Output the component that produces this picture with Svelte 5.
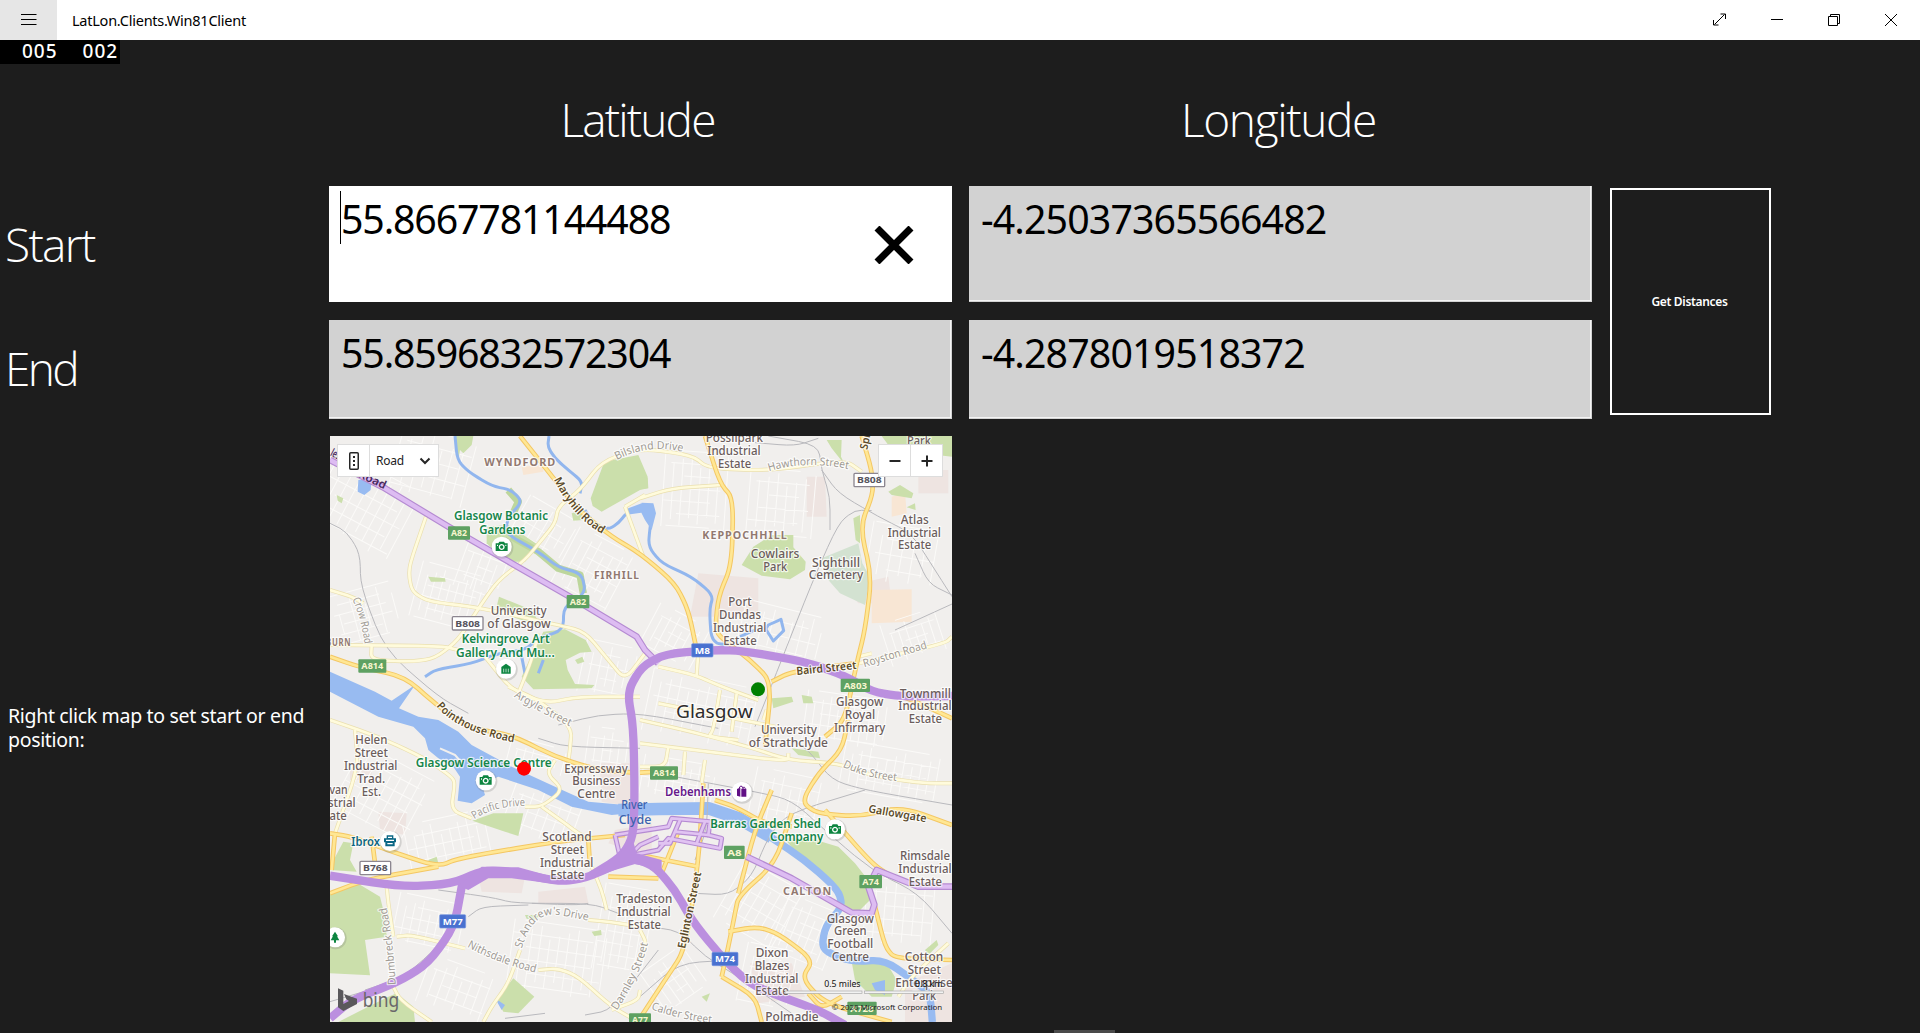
<script>
  // Map artwork uses a fine grid of three units per screen pixel.
  const parks = [
    'M797,205 L838,95 L940,75 L968,140 L968,175 L945,180 L830,245 L803,228Z',
    'M390,18 L445,18 L440,45 L415,70 L405,60 L400,90Z',
    'M485,290 L550,285 L640,345 L600,395 L540,395 L485,340Z',
    'M522,500 L620,540 L650,590 L560,560 L515,530Z',
    'M655,605 L720,598 L782,630 L800,665 L765,668 L722,690 L728,720 L750,762 L808,765 L800,775 L625,778 L590,740 L625,665Z',
    'M750,690 L772,680 L778,695 L758,702Z',
    'M310,440 L360,445 L362,455 L318,455Z',
    'M1250,405 L1285,350 L1340,315 L1405,315 L1405,352 L1442,395 L1440,420 L1395,448 L1310,437Z',
    'M1670,18 L1881,18 L1881,80 L1790,70 L1690,45Z',
    'M1505,30 L1550,30 L1548,80 L1560,105 L1520,55Z',
    'M1690,185 L1725,165 L1765,190 L1760,205 L1700,195Z',
    'M1745,232 L1770,220 L1772,240Z',
    'M15,1390 L95,1358 L165,1400 L180,1460 L185,1520 L120,1530 L135,1636 L15,1630Z',
    'M15,1310 L55,1235 L85,1240 L75,1290 L95,1325 L15,1320Z',
    'M442,1172 L505,1150 L595,1150 L580,1218 L540,1205Z',
    'M40,1776 L100,1745 L190,1700 L215,1690 L265,1730 L270,1776Z',
    'M565,1645 L628,1700 L580,1750 L535,1745 L515,1708Z',
    'M1378,1225 L1455,1225 L1540,1250 L1590,1300 L1625,1345 L1635,1410 L1600,1445 L1560,1430 L1545,1390 L1440,1300Z',
    'M1580,1595 L1680,1590 L1715,1650 L1700,1700 L1640,1700 L1590,1650Z',
    'M1800,1560 L1835,1530 L1840,1545 L1810,1575Z',
    'M1340,805 L1400,800 L1405,815 L1345,835Z',
    'M1430,795 L1460,800 L1465,820 L1435,820Z',
    'M1400,955 L1480,965 L1485,985 L1420,975Z',
    'M945,140 L968,145 L970,175 L945,178Z',
    'M1585,265 L1605,255 L1605,340 L1592,330Z',
    'M740,250 L770,240 L775,270 L745,272Z',
    'M35,195 L55,205 L50,220 L38,212Z',
    'M310,1290 L335,1280 L340,1300 L315,1312Z',
    'M600,1455 L645,1455 L630,1470 L605,1466Z',
    'M800,1505 L828,1500 L830,1515 L808,1518Z',
    'M1130,1700 L1155,1690 L1145,1715Z'
  ];
  const industrial = [
    'M1445,140 L1500,140 L1505,260 L1445,260Z',
    'M1120,430 L1300,445 L1300,560 L1095,560Z',
    'M1560,470 L1690,440 L1700,520 L1600,520Z',
    'M640,1385 L780,1370 L790,1420 L640,1420Z',
    'M825,1000 L930,1000 L930,1130 L830,1115Z',
    'M160,1145 L245,1150 L240,1215 L165,1200Z',
    'M75,1010 L140,1010 L140,1050 L75,1050Z',
    'M460,1340 L600,1340 L590,1390 L470,1385Z',
    'M1275,1600 L1400,1600 L1440,1700 L1300,1720Z',
    'M1740,1660 L1881,1600 L1881,1776 L1740,1776Z',
    'M870,1200 L980,1180 L980,1280 L850,1240Z',
    'M1780,120 L1870,120 L1870,190 L1780,190Z'
  ];
  const sands = [
    'M1640,480 L1760,478 L1760,575 L1640,580Z',
    'M1700,200 L1740,185 L1745,250 L1700,260Z',
    'M590,110 L655,105 L655,125 L595,135Z'
  ];

  // Small white side streets, laid out as rotated blocks.
  const blocks = [
    [120, 230, 280, 230, 28, 30], [330, 110, 240, 200, 15, 32], [370, 500, 200, 170, 15, 24],
    [120, 560, 170, 190, 75, 30], [660, 300, 180, 140, 30, 28], [810, 420, 200, 190, 28, 26],
    [1110, 180, 190, 230, 4, 27], [1370, 220, 200, 200, 5, 28], [1050, 620, 170, 140, 28, 24],
    [850, 720, 160, 160, 12, 26], [1130, 840, 330, 190, 12, 29], [1370, 610, 250, 150, 14, 30],
    [1740, 380, 220, 180, 10, 33], [1770, 620, 180, 130, -18, 24], [1560, 870, 240, 150, 8, 24],
    [1700, 1030, 300, 150, 10, 26], [180, 1100, 260, 220, 28, 29], [370, 1230, 250, 140, -12, 27],
    [660, 1160, 230, 160, 20, 30], [310, 1480, 200, 150, 12, 25], [700, 1590, 290, 210, 8, 28],
    [400, 1680, 220, 150, 20, 28], [900, 1500, 160, 260, 10, 25], [1060, 1050, 220, 120, 10, 24],
    [1390, 1110, 220, 160, 12, 28], [1310, 1430, 220, 200, 30, 28], [1450, 1510, 190, 180, 22, 25],
    [1730, 1450, 220, 200, 5, 29], [1330, 1640, 160, 180, 12, 25], [1050, 1650, 150, 150, -35, 25],
    [640, 980, 180, 80, 15, 24], [850, 960, 130, 130, 8, 24], [480, 420, 150, 150, 20, 26]
  ].map(([x, y, w, h, turn, gap]) => {
    let d = '';
    let n = 0;
    for (let i = -w / 2; i <= w / 2; i += gap) {
      const cut = (n * 37) % 50;
      d += `M${i},${-h / 2 + cut}V${h / 2 - ((n * 23) % 40)}`;
      n++;
    }
    for (let j = -h / 2; j <= h / 2; j += gap * 1.4) {
      const cut = (n * 41) % 70;
      d += `M${-w / 2 + cut},${j}H${w / 2 - ((n * 29) % 60)}`;
      n++;
    }
    return { d, move: `translate(${x} ${y}) rotate(${turn})` };
  });

  // Rounds the corners of an "M… L…" polyline so that roads bend gently.
  function bend(path) {
    return path
      .split('M')
      .filter((part) => part.trim())
      .map((part) => {
        const pts = part.split('L').map((p) => p.trim().split(',').map(Number));
        let d = `M${pts[0]}`;
        for (let i = 1; i < pts.length - 1; i++) {
          const [x, y] = pts[i];
          const near = ([a, b]) => [x + (a - x) * 0.4, y + (b - y) * 0.4];
          d += ` L${near(pts[i - 1])} Q${x},${y} ${near(pts[i + 1])}`;
        }
        return d + ` L${pts[pts.length - 1]}`;
      })
      .join(' ');
  }

  const lanes = [
    'M303,260 L255,400 L252,440 L262,485 L310,515 L460,532 L700,585 L780,605 L850,690 L900,750 L960,670',
    'M15,480 L80,500 L115,520', 'M15,645 L350,648 L400,660',
    'M140,645 L138,690 L260,695 L330,685 L400,630 L460,535 L520,450 L600,390 L650,330 L690,280 L700,230 L765,180 L830,95 L945,55 L1100,75 L1150,115 L1330,122 L1560,90 L1610,125',
    'M945,205 L1040,175 L1190,165', 'M900,230 L960,195', 'M900,230 L955,380',
    'M480,680 L560,780 L665,820 L760,800 L945,800', 'M580,790 L620,690 L640,610',
    'M550,770 L640,810 L740,890 L735,960 L725,1030',
    'M15,870 L160,920 L300,985 L380,1040 L390,1060 L378,1140 L440,1165',
    'M600,1130 L650,1130 L715,1080 L665,1030 L690,990', 'M650,1130 L720,1180 L760,1210 L800,1230',
    'M90,900 L100,1010 L30,1210', 'M185,1370 L190,1420 L205,1520',
    'M215,1520 L260,1515 L420,1555 M640,1620 L700,1615 L760,1640 L860,1730 L940,1776',
    'M200,1660 L225,1710 L320,1776', 'M475,1776 L500,1730 L550,1660 L585,1560',
    'M790,1470 L850,1475 L945,1490', 'M800,1310 L830,1380 L845,1440', 'M860,1740 L940,1710 L945,1680',
    'M1000,710 L1110,735 L1190,770 L1300,810', 'M1120,665 L1115,735', 'M1000,820 L1350,890',
    'M945,870 L1100,905 L1270,950 L1390,990 L1540,1000 L1650,1040 L1800,1060 L1881,1060',
    'M1185,780 L1165,900 L1150,920 L1240,930', 'M1235,790 L1220,905', 'M1325,840 L1315,870',
    'M945,940 L1150,965 L1390,995 L1390,970', 'M1030,950 L1020,1010 L945,1010', 'M1080,965 L1075,1035',
    'M1140,990 L1130,1060', 'M1600,700 L1860,640 L1881,620',
    'M1600,680 L1640,670', 'M1870,1540 L1760,1640 L1720,1700', 'M945,1500 L965,1540 L945,1590'
  ].map(bend);
  const mainRoads = [
    'M585,18 L690,150 L760,240 L860,320 L945,370 L1050,460 L1090,540 L1115,660',
    'M1140,18 L1185,160 L1225,205 L1220,405 L1180,500 L1170,605 L1210,640 L1275,690 L1340,755 L1320,950',
    'M1340,755 L1400,725 L1590,700', 'M1610,18 L1640,120 L1645,190 L1605,290 L1640,440 L1620,600 L1595,700 L1560,870 L1500,920',
    'M1640,780 L1740,800 L1881,865', 'M1570,870 L1550,960 L1480,1030 L1430,1115 L1475,1150 L1600,1160 L1730,1130 L1881,1185',
    'M15,680 L100,710 L240,740 L340,830 L440,895 L560,915 L690,980 L820,1020 L930,1028',
    'M15,1210 L80,1220 L200,1265 L340,1310 L400,1285 L690,1235 L900,1215',
    'M15,1390 L120,1350 L340,1310', 'M30,1210 L20,1320', 'M140,1220 L150,1300',
    'M1170,1110 L1230,1130 L1320,1180 L1400,1190', 'M1400,1150 L1350,1300 L1240,1400 L1230,1450 L1210,1550 L1190,1640',
    'M1500,1140 L1640,1300 L1700,1340', 'M1650,1430 L1680,1550 L1710,1585 L1881,1590',
    'M1210,1505 L1295,1490 L1360,1510 L1465,1590 L1430,1645 L1500,1720 L1700,1776',
    'M1190,1640 L1290,1700 L1310,1776', 'M945,1765 L1020,1650 L1080,1560 L1120,1300 L1135,1060',
    'M1340,1080 L1290,1200 L1240,1390', 'M790,1230 L795,1310', 'M850,1340 L1000,1345', 'M945,1275 L1120,1310', 'M1060,1205 L1010,1330',
    'M1450,1690 L1490,1735 L1550,1700', 'M945,1028 L1000,1025'
  ].map(bend);
  const rails = [
    'M15,280 L65,305 L105,370 L107,470 L180,660 L340,800 L430,850',
    'M640,925 L720,950 L945,955 M700,885 L820,855 L945,850 L1180,895 M1330,18 L1480,45 L1490,120 L1515,200 L1515,300 M1290,38 L1410,48 L1480,25 M1490,120 L1540,190 L1660,260 L1760,310 L1830,420 L1881,500 M1770,370 L1810,460 L1881,495 M1640,242 L1590,240 L1540,280 L1460,460 L1350,740 L1290,890 M1710,600 L1881,522',
    'M340,1380 L500,1402 L570,1420 L800,1420 L880,1450 M430,1460 L470,1430 L610,1425 M620,1420 L750,1425 L790,1420',
    'M120,1680 L240,1640 L380,1510 M15,1715 L150,1675',
    'M1050,1040 L1290,1085 L1400,1110 L1510,1210 L1640,1320 L1780,1390 L1881,1510',
    'M1400,930 L1450,960 L1520,1050 L1620,1080 L1881,1125 M1620,1080 L1390,1150 L1330,1220 L1280,1340 L1210,1395 L1110,1390',
    'M1150,1060 L1145,1200 L1110,1290 M945,1490 L1060,1500 L1140,1580 L1240,1640 L1400,1750 M945,1700 L1060,1600 L1220,1590',
    'M540,1765 L660,1750 M780,1755 L860,1740 L1000,1560'
  ].map(bend);
  const motorways = [
    'M1881,798 L1730,800 L1640,785 L1560,737 L1440,695 L1250,662 L1160,660 L1020,672 L950,710 L907,785 L925,890 L929,1090 L925,1220 L890,1280 L800,1335',
    'M15,1337 L230,1370 L380,1362 L475,1320 L560,1325 L700,1355 L780,1345 L870,1305 L930,1285 L990,1310 L1050,1380 L1100,1470 L1180,1570 L1270,1660 L1380,1705 L1480,1740 L1560,1785',
    'M412,1360 L388,1490 L310,1600 L220,1655 L80,1710 L15,1765'
  ].map(bend);
  const trunks = [
    'M15,90 L180,175 L370,290 L560,400 L760,515 L935,620 L960,660 L1000,700',
    'M1265,1280 L1400,1345 L1580,1448 L1640,1450 L1648,1424 L1630,1370 L1655,1320 L1780,1370 L1881,1370'
  ];
  const ramps = [
    'M870,1215 L1030,1190 L1040,1165 L1155,1175 L1150,1215 L1190,1225 L1185,1255 L1030,1225 L1000,1260 L900,1280',
    'M1065,1170 L1035,1240 L1000,1240 M1140,1175 L1115,1240 M1050,1205 L1150,1215',
    'M870,1215 L885,1280 M900,1290 L945,1245 L1000,1220'
  ];

  // [text, centre x, baseline, drawn width]
  const places = [
    ['University', 581, 556, 168], ['of Glasgow', 582, 593, 190],
    ['Possilpark', 1228, 36, 172], ['Industrial', 1227, 75, 160], ['Estate', 1229, 113, 100],
    ['Cowlairs', 1350, 384, 146], ['Park', 1351, 423, 72], ['Sighthill', 1533, 410, 144], ['Cemetery', 1533, 448, 164],
    ['Atlas', 1769, 281, 84], ['Industrial', 1768, 320, 160], ['Estate', 1769, 358, 100], ['Park', 1782, 46, 72],
    ['Port', 1245, 528, 70], ['Dundas', 1245, 567, 126], ['Industrial', 1244, 605, 160], ['Estate', 1245, 644, 100],
    ['Townmill', 1801, 803, 154], ['Industrial', 1800, 841, 160], ['Estate', 1801, 879, 100],
    ['Glasgow', 1604, 829, 142], ['Royal', 1605, 867, 92], ['Infirmary', 1604, 906, 154],
    ['University', 1392, 911, 168], ['of Strathclyde', 1390, 951, 238],
    ['Helen', 139, 942, 96], ['Street', 139, 981, 100], ['Industrial', 137, 1020, 160], ['Trad.', 139, 1059, 84], ['Est.', 139, 1097, 58],
    ['Govan', 20, 1091, 96], ['Industrial', 12, 1130, 160], ['Estate', 15, 1169, 100],
    ['Expressway', 813, 1028, 190], ['Business', 814, 1066, 144], ['Centre', 814, 1104, 114],
    ['Scotland', 726, 1233, 148], ['Street', 727, 1271, 100], ['Industrial', 725, 1310, 160], ['Estate', 727, 1348, 102],
    ['Tradeston', 958, 1420, 168], ['Industrial', 957, 1459, 160], ['Estate', 958, 1497, 100],
    ['Dixon', 1341, 1581, 98], ['Blazes', 1341, 1619, 104], ['Industrial', 1340, 1658, 160], ['Estate', 1341, 1696, 100], ['Polmadie', 1401, 1773, 160],
    ['Rimsdale', 1800, 1291, 150], ['Industrial', 1800, 1330, 160], ['Estate', 1801, 1368, 100],
    ['Glasgow', 1576, 1478, 142], ['Green', 1576, 1516, 98], ['Football', 1576, 1555, 138], ['Centre', 1576, 1593, 112],
    ['Cotton', 1797, 1593, 116], ['Street', 1798, 1632, 100], ['Enterprise', 1797, 1671, 172], ['Park', 1798, 1710, 72]
  ];
  const districts = [
    ['WYNDFORD', 586, 108, 216], ['FIRHILL', 876, 447, 138], ['KEPPOCHHILL', 1260, 326, 256],
    ['CALTON', 1448, 1395, 148], ['THORNBURN', -6, 647, 170]
  ];
  const sights = [
    ['Glasgow Botanic', 528, 271, 282], ['Gardens', 532, 311, 138],
    ['Kelvingrove Art', 542, 639, 264], ['Gallery And Mu...', 541, 680, 296],
    ['Glasgow Science Centre', 476, 1010, 408],
    ['Barras Garden Shed', 1322, 1194, 332], ['Company', 1415, 1233, 160]
  ];
  const streets = [
    ['Bilsland Drive', 'M875,90 Q965,42 1068,64', 204, 'soft'],
    ['Hawthorn Street', 'M1332,124 Q1440,90 1572,118', 240, 'soft'],
    ['Maryhill Road', 'M686,148 Q745,265 836,314', 222, 'strong'],
    ['Crow Road', 'M82,508 Q108,560 120,650', 140, 'soft'],
    ['Argyle Street', 'M566,800 Q650,850 740,892', 190, 'soft'],
    ['Pointhouse Road', 'M334,828 Q395,905 572,938', 262, 'strong'],
    ['Baird Street', 'M1415,735 L1600,716', 181, 'strong'],
    ['Royston Road', 'M1618,712 L1812,653', 198, 'soft'],
    ['Pacific Drive', 'M448,1168 Q510,1126 605,1128', 160, 'soft'],
    ['Duke Street', 'M1553,1010 Q1620,1045 1725,1054', 168, 'soft'],
    ['Gallowgate', 'M1629,1147 L1810,1178', 176, 'strong'],
    ['Eglinton Street', 'M1080,1557 L1132,1315', 234, 'strong'],
    ['Dumbreck Road', 'M212,1664 Q208,1560 184,1425', 234, 'soft'],
    ['Nithsdale Road', 'M426,1550 Q520,1602 642,1630', 220, 'soft'],
    ["St Andrew's Drive", 'M590,1556 Q625,1435 710,1457 L796,1473', 256, 'soft'],
    ['Darnley Street', 'M875,1742 Q945,1640 970,1535', 224, 'soft'],
    ['Calder Street', 'M978,1738 Q1070,1770 1166,1780', 186, 'soft'],
    ['Springburn Road', 'M1627,60 L1680,-200', 250, 'strong'],
    ['les', 'M14,76 L60,100', 28, 'night'],
    ['Road', 'M98,140 L190,184', 88, 'night']
  ];
  // [text, centre x, centre y, width, kind]
  const shields = [
    ['A82', 402, 309, 66, 'a'], ['A82', 759, 515, 68, 'a'], ['A814', 142, 708, 84, 'a'], ['A803', 1591, 766, 88, 'a'],
    ['A814', 1017, 1029, 84, 'a'], ['A8', 1228, 1267, 62, 'a'], ['A74', 1637, 1355, 68, 'a'], ['A77', 945, 1770, 66, 'a'], ['A728', 1611, 1735, 88, 'a'],
    ['M8', 1132, 661, 64, 'm'], ['M77', 383, 1474, 78, 'm'], ['M74', 1200, 1587, 78, 'm'],
    ['B808', 428, 580, 92, 'b'], ['B808', 1633, 150, 92, 'b'], ['B768', 151, 1314, 92, 'b']
  ];
  const cameras = [[530, 350], [482, 1051], [1530, 1198]];
</script>

{#snippet label(row, kind)}
  <text class={kind} x={row[1]} y={row[2]} textLength={row[3]} lengthAdjust="spacingAndGlyphs">{row[0]}</text>
{/snippet}

<div class="window">
  <header class="titlebar">
    <button class="menu" aria-label="Menu">
      <svg width="16" height="12" viewBox="0 0 16 12"><path d="M0 .5H15.500M0 5.500H15.500M0 10.500H15.500" /></svg>
    </button>
    <h1>LatLon.Clients.Win81Client</h1>
    <div class="controls">
      <button aria-label="Full screen">
        <svg width="14" height="14" viewBox="0 0 14 14"><path d="M1.500 11.500L11.500 1.500M7.500 1H12.500V6M.5 7V12H5.500" /></svg>
      </button>
      <button aria-label="Minimise">
        <svg width="14" height="14" viewBox="0 0 14 14"><path d="M1 6.500H13" /></svg>
      </button>
      <button aria-label="Restore">
        <svg width="14" height="14" viewBox="0 0 14 14"><path d="M1.500 3.500H10.500V12.500H1.500ZM3.500 3V1.500H12.500V10.500H11" /></svg>
      </button>
      <button aria-label="Close">
        <svg width="14" height="14" viewBox="0 0 14 14"><path d="M1 1L13 13M13 1L1 13" /></svg>
      </button>
    </div>
  </header>

  <div class="counter"><span>005</span><span>002</span></div>

  <main>
    <h2 class="lat-title">Latitude</h2>
    <h2 class="lon-title">Longitude</h2>
    <div class="row-name start">Start</div>
    <div class="field focus start-lat">
      <span class="caret"></span><span class="value">55.8667781144488</span>
      <svg class="clear" width="40" height="38" viewBox="0 0 40 38"><path d="M3 2L37 36M37 2L3 36" /></svg>
    </div>
    <div class="field start-lon"><span class="value">-4.25037365566482</span></div>
    <div class="row-name end">End</div>
    <div class="field end-lat"><span class="value">55.8596832572304</span></div>
    <div class="field end-lon"><span class="value">-4.2878019518372</span></div>
    <button class="distances">Get Distances</button>
    <p class="hint">Right click map to set start or end<br />position:</p>

    <section class="map">
      <svg class="chart" viewBox="15 18 1866 1758" width="622" height="586">
        <rect class="land" x="15" y="18" width="1866" height="1758" />
        {#each industrial as d}<path class="industrial" {d} />{/each}
        {#each sands as d}<path class="sand" {d} />{/each}
        {#each blocks as b}<path class="block" d={b.d} transform={b.move} />{/each}
        {#each parks as d}<path class="park" {d} />{/each}
        <path class="cemetery" d="M1490,385 L1600,340 L1612,400 L1635,440 L1620,525 L1545,490 L1510,450Z" />

        <g class="water">
          <path class="bank" d="M550,180 L580,215 L560,260 M560,320 L640,365 L700,415 L765,435 L775,490" />
          <path class="stream" d={bend('M390,18 L397,90 L430,125 L500,168 L560,180 L592,215 L550,260 L540,310 L640,365 L700,412 L770,430 L782,490 L716,530 L715,600 L640,625 L600,660 L520,670 L440,700 L330,720 L300,740')} />
          <path class="stream" d={bend('M672,18 L668,50 L690,85 L730,120 L772,155 L765,190 M780,240 L810,285 L850,298 L880,280 L910,242 L985,238 L975,290 L970,350 L1010,400 L1100,440 L1165,495 L1153,540 L1160,640 L1230,645')} />
          <path class="area" d="M100,150 L140,145 L137,180 L118,195 L98,185Z M950,218 L985,220 L993,250 L980,300 L960,270 L945,240Z M910,235 L950,220 L970,245 L900,255Z" />
          <path class="area" d="M15,725 L150,785 L200,812 L270,765 L222,835 L280,860 L340,870 L400,905 L440,945 L560,1010 L700,1075 L790,1115 L900,1125 L920,1150 L860,1155 L740,1130 L640,1080 L520,1040 L470,1060 L480,1095 L440,1120 L398,1112 L405,1040 L385,1010 L340,985 L310,960 L300,925 L265,890 L160,860 L15,785Z" />
          <path class="river" d="M880,1140 L1000,1137 L1150,1135 L1240,1165 L1340,1222" />
          <path class="river narrow" d={bend('M1320,1210 L1440,1290 L1540,1380 L1552,1430 L1500,1490 L1490,1560 L1580,1595 L1680,1590 L1770,1655 L1815,1690 L1822,1776')} />
          <path class="stream" d="M1330,585 L1368,568 L1376,602 L1345,633 L1322,597Z M1245,620 L1290,600 M640,730 L655,690 M600,730 L590,680 L560,665" />
          <path class="area" d="M1640,1660 L1680,1650 L1680,1695 L1650,1680Z M510,1705 L540,1725 L530,1740Z" />
          <path class="quay" d="M345,955 L390,975 L412,1000" />
        </g>

        {#each rails as d}<path class="rail" {d} />{/each}
        {#each lanes as d}<path class="lane-edge" {d} />{/each}
        {#each lanes as d}<path class="lane" {d} />{/each}
        {#each mainRoads as d}<path class="main-edge" {d} />{/each}
        {#each mainRoads as d}<path class="main-road" {d} />{/each}
        {#each trunks as d}<path class="trunk-edge" {d} />{/each}
        {#each trunks as d}<path class="trunk" {d} />{/each}
        {#each ramps as d}<path class="ramp-edge" {d} />{/each}
        {#each ramps as d}<path class="ramp" {d} />{/each}
        {#each motorways as d}<path class="motorway" {d} />{/each}
        <path class="interchange" d="M400,1368 L470,1310 L580,1312 L700,1345 L690,1362 L560,1345 L490,1345 L430,1380Z M800,1345 L880,1270 L925,1235 L935,1270 L1010,1290 L1010,1320 L930,1302 L870,1320Z" />

        {#each streets as [name, d, length, kind], i}
          <path id={'street' + i} {d} fill="none" />
          <text class={'street ' + kind}><textPath href={'#street' + i} textLength={length} lengthAdjust="spacingAndGlyphs">{name}</textPath></text>
        {/each}
        {#each places as row}{@render label(row, 'place')}{/each}
        {#each districts as row}{@render label(row, 'district')}{/each}
        {#each sights as row}{@render label(row, 'sight')}{/each}
        {@render label(['River', 928, 1138, 78], 'river-name')}
        {@render label(['Clyde', 930, 1183, 98], 'river-name')}
        {@render label(['Ibrox', 122, 1247, 86], 'transit')}
        {@render label(['Debenhams', 1119, 1098, 198], 'shop')}
        {@render label(['Glasgow', 1168, 863, 230], 'city')}

        {#each shields as [name, x, y, w, kind]}
          <g class={'shield ' + kind}>
            <rect x={x - w / 2} y={y - 20} width={w} height="40" rx="3" />
            <text {x} y={y + 10} textLength={w - 18} lengthAdjust="spacingAndGlyphs">{name}</text>
          </g>
        {/each}

        {#each cameras as [x, y]}
          <g transform="translate({x} {y})">
            <circle class="pin-shadow" cx="2" cy="3" r="33" /><circle class="pin" r="30" />
            <path class="green" fill-rule="evenodd" d="M-18,-10H-10L-7,-15H7L10,-10H18V13H-18ZM0,-8A9,9 0 1 0 .1,-8ZM-14,-6V-2H-11V-6ZM11,-6V-2H14V-6Z" />
            <circle class="green" cy="1" r="5" />
          </g>
        {/each}
        <g transform="translate(543 716)">
          <circle class="pin-shadow" cx="2" cy="3" r="33" /><circle class="pin" r="30" />
          <path class="green" d="M-14,-5L0,-15L14,-5V15H-14Z" />
          <path class="slots" d="M-7,0V11M0,0V11M7,0V11" />
        </g>
        <g transform="translate(1250 1085)">
          <circle class="pin-shadow" cx="2" cy="3" r="33" /><circle class="pin" r="30" />
          <path class="purple" d="M-14,-8L-4,-12V15L-14,12ZM-1,-9H14V15H-1Z" />
          <path class="handle" d="M-8,-10Q-4,-20 1,-16L5,-9M3,-9Q7,-19 11,-9" />
        </g>
        <g transform="translate(195 1233)">
          <circle class="pin-shadow" cx="2" cy="3" r="33" /><circle class="pin" r="30" />
          <path class="teal" fill-rule="evenodd" d="M-10,-17H10V-8H18V4H14V16H-14V4H-18V-8H-10ZM-6,-13V-9H6V-13ZM-12,-4V0H12V-4ZM-8,6V10H8V6Z" />
        </g>
        <g transform="translate(30 1522)">
          <circle class="pin-shadow" cx="2" cy="3" r="33" /><circle class="pin" r="30" />
          <path class="green" d="M0,-17L9,-3H6L13,9H3V16H-3V9H-13L-6,-3H-9Z" />
        </g>

        <circle class="start-dot" cx="1299" cy="778" r="21" />
        <circle class="end-dot" cx="597" cy="1016" r="21" />

        <path class="bing-mark" d="M39,1675L55,1682V1722L72,1713L64,1708L57,1692L96,1706V1722L55,1743L39,1732Z" />
        <text class="bing" x="113" y="1730" textLength="110" lengthAdjust="spacingAndGlyphs">bing</text>
        <rect class="scale" x="1380" y="1683" width="231" height="7" />
        <rect class="scale" x="1618" y="1683" width="237" height="7" />
        {@render label(['0.5 miles', 1552, 1671, 109], 'scale-text')}
        {@render label(['0.8 km', 1811, 1671, 82], 'scale-text')}
        {@render label(['© 2020 Microsoft Corporation', 1686, 1739, 331], 'copyright')}
      </svg>
      <div class="toolbar style-picker">
        <button class="compass" aria-label="Traffic">
          <svg width="10" height="18" viewBox="0 0 10 18"><rect x=".75" y=".75" width="8.500" height="16.500" rx="1" /><path d="M4 4H6V6H4ZM4 8H6V10H4ZM4 12H6V14H4Z" /></svg>
        </button>
        <button class="road"><span>Road</span><svg width="12" height="8" viewBox="0 0 12 8"><path d="M1.500 1.500L6 6L10.500 1.500" /></svg></button>
      </div>
      <div class="toolbar zoomer">
        <button aria-label="Zoom out"><svg width="12" height="12" viewBox="0 0 12 12"><path d="M.5 6H11.500" /></svg></button>
        <button aria-label="Zoom in"><svg width="12" height="12" viewBox="0 0 12 12"><path d="M.5 6H11.500M6 .5V11.500" /></svg></button>
      </div>
    </section>
  </main>
  <div class="app-bar"></div>
</div>

<style>
  :global(body) { margin: 0; background: #1d1d1d; overflow: hidden; }
  .window {
    width: 1920px; height: 1033px; display: flex; flex-direction: column; position: relative;
    background: #1d1d1d; color: #fff; font-family: "Noto Sans", "Open Sans", sans-serif;
  }
  button { all: unset; box-sizing: border-box; display: flex; align-items: center; justify-content: center; }
  .titlebar { height: 40px; flex: none; display: flex; background: #fff; color: #000; }
  .titlebar svg { fill: none; stroke: #000; stroke-width: 1; }
  .menu { width: 57px; background: #e6e6e6; }
  h1 { margin: 0 0 0 15px; flex: 1; font-size: 14.500px; font-weight: 400; line-height: 40px; letter-spacing: -0.24px; }
  .controls { display: flex; padding-right: 1px; }
  .controls button { width: 57px; }
  .counter {
    box-sizing: border-box; width: 120px; height: 24px; flex: none; display: flex; gap: 25px; padding-left: 22px;
    background: #000; font-size: 19px; font-weight: 500; line-height: 23px; letter-spacing: 1px;
  }
  main {
    display: grid; grid-template-columns: 329px 623px 17px 623px 18px 161px;
    grid-template-rows: 122px 116px 18px 99px 17px 586px; flex: none;
  }
  h2, .row-name { margin: 0; font-size: 46px; font-weight: 300; font-family: "Open Sans", sans-serif; line-height: 60px; }
  h2 { padding-top: 25px; text-align: center; }
  .lat-title { grid-area: 1 / 2; padding-right: 6px; letter-spacing: -1.850px; }
  .lon-title { grid-area: 1 / 4; padding-right: 4px; letter-spacing: -1.350px; }
  .row-name { align-self: center; padding-left: 5px; }
  .start { grid-area: 2 / 1; letter-spacing: -1.700px; }
  .end { grid-area: 4 / 1; padding-bottom: 4px; letter-spacing: -2.700px; }
  .field {
    display: flex; align-items: flex-start; position: relative; box-sizing: border-box; padding: 5px 12px;
    background: #d2d2d2; color: #000; box-shadow: inset -1px -1px #d2d2d2, inset -2px -2px #f4f4f4;
  }
  .value { font-size: 39.300px; line-height: 56px; letter-spacing: -1.150px; }
  .start-lon .value, .end-lon .value { letter-spacing: -0.880px; }
  .focus { background: #fff; box-shadow: none; }
  .caret { position: absolute; left: 11px; top: 5px; width: 1px; height: 53px; background: #000; }
  .clear { margin: 35px 26px 0 auto; fill: none; stroke: #000; stroke-width: 7; }
  .start-lat { grid-area: 2 / 2; }
  .start-lon { grid-area: 2 / 4; }
  .end-lat { grid-area: 4 / 2; }
  .end-lon { grid-area: 4 / 4; }
  .distances {
    grid-area: 2 / 6 / 5 / 7; margin: 2px 0 4px; border: 2px solid #fff; padding-right: 2px;
    font-size: 12px; font-weight: 600; letter-spacing: -0.320px;
  }
  .hint { grid-area: 6 / 1; align-self: center; margin: 0 0 3px 8px; font-size: 19.500px; line-height: 24px; letter-spacing: -0.33px; white-space: nowrap; }
  .map { grid-area: 6 / 2; margin-left: 1px; position: relative; overflow: hidden; }
  .chart { display: block; font-family: "Noto Sans", "Open Sans", sans-serif; }
  .app-bar { position: absolute; left: 1054px; bottom: 0; width: 61px; height: 3px; background: #4a4a4a; }

  .toolbar { position: absolute; top: 8px; height: 33px; display: flex; box-sizing: border-box; background: #fff; border: 1px solid #ddd; color: #222; }
  .toolbar svg { fill: none; stroke: #262626; stroke-width: 2; }
  .style-picker { left: 7px; width: 102px; }
  .compass { width: 32px; border-right: 1px solid #ddd; }
  .compass svg { stroke-width: 1.500; }
  .compass path { fill: #262626; stroke: none; }
  .road { flex: 1; gap: 15px; padding-right: 1px; font-size: 12px; letter-spacing: -0.200px; }
  .zoomer { left: 548px; width: 65px; }
  .zoomer button { flex: 1; }
  .zoomer button + button { border-left: 1px solid #ddd; }

  .chart path { stroke-linejoin: round; }
  .land { fill: #f1efed; }
  .industrial { fill: #eee4e1; }
  .sand { fill: #f8e6d4; }
  .park { fill: #cbdfab; }
  .cemetery { fill: #d3e2d1; }
  .block { fill: none; stroke: #fbfaf8; stroke-width: 3; }
  .bank { fill: none; stroke: #bdd69c; stroke-width: 22; }
  .stream { fill: none; stroke: #91b6ee; stroke-width: 9; }
  .area { fill: #98bbf1; }
  .quay { fill: none; stroke: #f1efed; stroke-width: 6; }
  .river { fill: none; stroke: #98bbf1; stroke-width: 38; }
  .river.narrow { stroke-width: 22; }
  .rail { fill: none; stroke: #b9b9bd; stroke-width: 3; }
  .lane-edge { fill: none; stroke: #eadfaf; stroke-width: 12; }
  .lane { fill: none; stroke: #fffbdc; stroke-width: 8; }
  .main-edge { fill: none; stroke: #f4c763; stroke-width: 14; }
  .main-road { fill: none; stroke: #ffe794; stroke-width: 8; }
  .trunk-edge { fill: none; stroke: #b58bd2; stroke-width: 20; }
  .trunk { fill: none; stroke: #ddbcf2; stroke-width: 13; }
  .ramp-edge { fill: none; stroke: #b58bd2; stroke-width: 15; }
  .ramp { fill: none; stroke: #e1c3f2; stroke-width: 8; }
  .motorway { fill: none; stroke: #bb8fdf; stroke-width: 25; }
  .interchange { fill: #bb8fdf; }
  .place, .district, .sight, .river-name, .transit, .shop, .city, .scale-text, .copyright { text-anchor: middle; }
  .place, .district, .sight, .transit, .shop, .city, .street { paint-order: stroke; stroke: rgba(255, 255, 255, 0.75); stroke-width: 7px; stroke-linejoin: round; }
  .place { font-size: 35px; font-weight: 500; fill: #6b5d5c; }
  .district { font-size: 32px; font-weight: 700; fill: #927971; letter-spacing: 3px; }
  .sight { font-size: 36px; font-weight: 600; fill: #15854a; }
  .river-name { font-size: 38px; font-weight: 500; fill: #3b62ad; }
  .transit { font-size: 35px; font-weight: 600; fill: #0c6684; }
  .shop { font-size: 35px; font-weight: 600; fill: #66188b; }
  .city { font-size: 55px; fill: #2e2c2c; }
  .street { font-size: 33px; }
  .soft { fill: #a09a94; }
  .strong { fill: #5c4b2b; font-weight: 600; }
  .night { fill: #47295c; font-weight: 600; stroke: none; }
  .shield text { font-size: 28px; font-weight: 700; text-anchor: middle; fill: #fff; }
  .a rect { fill: #5ea162; }
  .a text { fill: #f9f6cf; }
  .m rect { fill: #4971d0; stroke: #7795df; stroke-width: 2; }
  .b rect { fill: #fff; stroke: #8c8690; stroke-width: 4; }
  .b text { fill: #55535c; }
  .pin-shadow { fill: #777; opacity: 0.25; }
  .pin { fill: #fff; }
  .green { fill: #0d8540; }
  .slots { stroke: #fff; stroke-width: 2; }
  .purple { fill: #611085; }
  .handle { fill: none; stroke: #611085; stroke-width: 3; }
  .teal { fill: #0b6785; }
  .start-dot { fill: #008000; }
  .end-dot { fill: #f00; }
  .bing-mark { fill: #5a585b; }
  .bing { font-size: 57px; fill: #69676a; }
  .scale { fill: #f2f2f2; stroke: #aaa; stroke-width: 2; }
  .scale-text { font-size: 27px; fill: #111; }
  .copyright { font-size: 22px; fill: #222; }
</style>
